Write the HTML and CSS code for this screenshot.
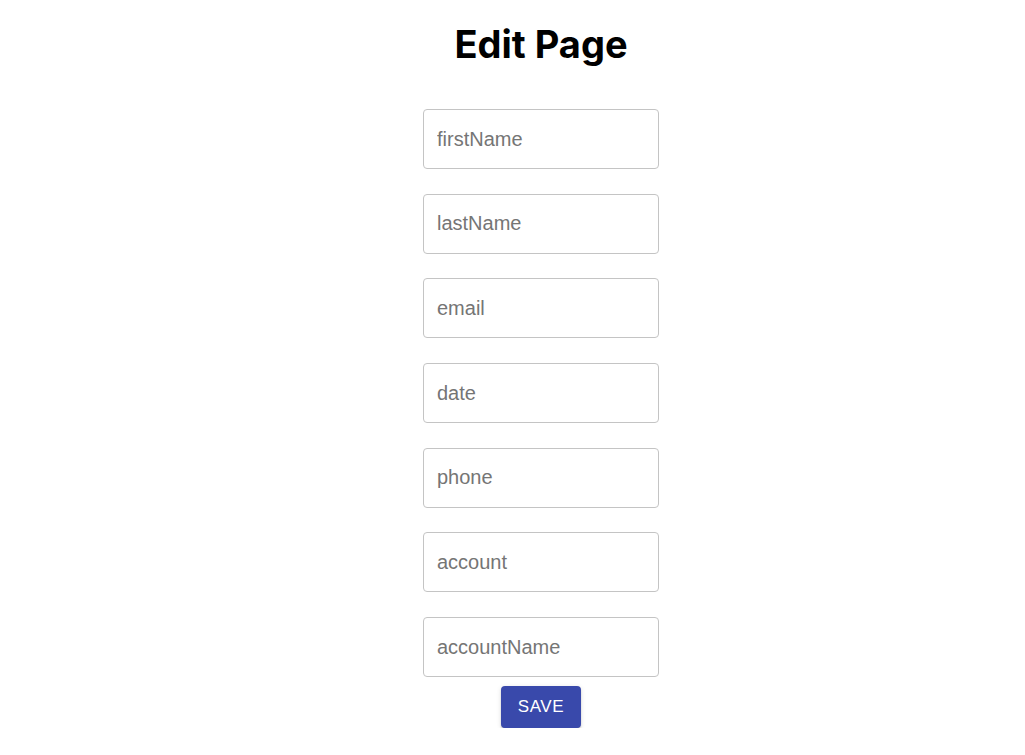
FILE: index.html
```html
<!DOCTYPE html>
<html>
<head>
<meta charset="utf-8">
<link rel="stylesheet" href="styles.css">
</head>
<body>
<div class="page">
  <h1 class="title">Edit Page</h1>
  <form class="form">
    <div class="field"><input class="input" placeholder="firstName"></div>
    <div class="field"><input class="input" placeholder="lastName"></div>
    <div class="field"><input class="input" placeholder="email"></div>
    <div class="field"><input class="input" placeholder="date"></div>
    <div class="field"><input class="input" placeholder="phone"></div>
    <div class="field"><input class="input" placeholder="account"></div>
    <div class="field"><input class="input" placeholder="accountName"></div>
    <button type="button" class="save">SAVE</button>
  </form>
</div>
</body>
</html>
```
FILE: styles.css
```css
html, body {
  margin: 0;
  padding: 0;
  background: #fff;
}
.page {
  display: flex;
  flex-direction: column;
  align-items: center;
  padding-left: 57px;
}
.title {
  font-family: Inter, "Liberation Sans", sans-serif;
  font-weight: 700;
  font-size: 38px;
  line-height: 48px;
  margin: 20px 0 0 0;
  color: #000;
}
.form {
  display: flex;
  flex-direction: column;
  align-items: center;
  margin-top: 41px;
}
.field {
  margin-bottom: 24.7px;
}
.field:last-of-type {
  margin-bottom: 9px;
}
.input {
  box-sizing: border-box;
  width: 236px;
  height: 60px;
  border: 1px solid #c4c4c4;
  border-radius: 4px;
  padding: 0 13px;
  font-family: "Liberation Sans", Arial, sans-serif;
  font-size: 20px;
  color: #222;
  outline: none;
  display: block;
}
.input::placeholder {
  color: #757575;
  opacity: 1;
}
.save {
  width: 80px;
  height: 42px;
  border: none;
  border-radius: 4px;
  background: #3949ab;
  color: #fff;
  font-family: "Liberation Sans", Arial, sans-serif;
  font-size: 17px;
  letter-spacing: 0.6px;
  box-shadow: 0 3px 1px -2px rgba(0,0,0,0.2), 0 2px 2px 0 rgba(0,0,0,0.14), 0 1px 5px 0 rgba(0,0,0,0.12);
  cursor: pointer;
  padding: 0;
}
```
